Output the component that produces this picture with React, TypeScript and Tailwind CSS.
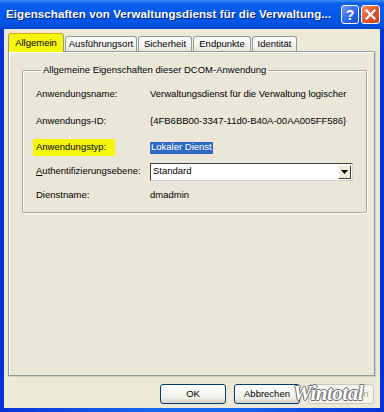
const rows = [
  { label: "Anwendungsname:", value: "Verwaltungsdienst für die Verwaltung logischer" },
  { label: "Anwendungs-ID:", value: "{4FB6BB00-3347-11d0-B40A-00AA005FF586}" },
];

const tabs = ["Ausführungsort", "Sicherheit", "Endpunkte", "Identität"];
const tabWidths = ["w-[72px]", "w-[54px]", "w-[58px]", "w-[45px]"];

const TitleButton = ({ kind }: { kind: "help" | "close" }) => (
  <div
    className={
      kind === "help"
        ? "w-[18px] h-[19px] rounded-[3px] border border-white bg-[linear-gradient(135deg,#6d9cf8,#2a63e6_60%,#1a4fd4)] flex items-center justify-center"
        : "w-[19px] h-[19px] rounded-[3px] border border-white bg-[linear-gradient(135deg,#f0906a,#e1522a_55%,#c8401a)] flex items-center justify-center"
    }
  >
    {kind === "help" ? (
      <span className="text-white font-bold text-[14px] leading-none font-['Liberation_Sans',sans-serif]">?</span>
    ) : (
      <svg width="11" height="11" viewBox="0 0 11 11">
        <path d="M1.5 1.5 L9.5 9.5 M9.5 1.5 L1.5 9.5" stroke="white" strokeWidth="2.2" strokeLinecap="square" />
      </svg>
    )}
  </div>
);

const XpButton = ({ label, disabled }: { label: string; disabled?: boolean }) => (
  <div
    className={
      disabled
        ? "w-[66px] h-[20px] rounded-[3px] border border-[#c9c7ba] bg-[#f5f4ea] text-[#aca899] flex items-center justify-center"
        : "w-[66px] h-[20px] rounded-[3px] border border-[#003c74] bg-[linear-gradient(180deg,#ffffff,#f0f0ea_70%,#d6d0c5)] text-black flex items-center justify-center"
    }
  >
    {label}
  </div>
);

export default function App() {
  return (
    <div className="w-[384px] h-[412px] flex flex-col bg-[linear-gradient(90deg,#0831d9,#166aee_40%,#166aee_60%,#0831d9)] font-['Liberation_Sans',Arial,sans-serif] text-[9.5px] text-black overflow-hidden">
      {/* title bar */}
      <div className="h-[29px] shrink-0 flex items-center justify-between pl-[6px] pr-[4px] bg-[linear-gradient(180deg,#3d8ef5_0%,#0a5fea_12%,#0058ee_45%,#0054e3_80%,#0046c8_100%)]">
        <span className="text-white font-bold text-[11.5px] tracking-[0.1px] [text-shadow:1px_1px_0_#0a1e7a] whitespace-nowrap">
          Eigenschaften von Verwaltungsdienst für die Verwaltung...
        </span>
        <div className="flex gap-[2px] items-center">
          <TitleButton kind="help" />
          <TitleButton kind="close" />
        </div>
      </div>

      {/* dialog body */}
      <div className="flex-1 mx-[4px] mb-[4px] bg-[#ece9d8] flex flex-col pl-[4px] pr-[5px] pt-[3px]">
        {/* tabs */}
        <div className="flex items-end h-[19px] relative z-10">
          <div className="w-[56px] h-[19px] -mb-px rounded-t-[3px] border border-b-0 border-[#919b9c] border-t-[#e0b000] bg-[#f6f60c] flex items-center justify-center">
            Allgemein
          </div>
          {tabs.map((t, i) => (
            <div
              key={t}
              className={`${tabWidths[i]} h-[15px] ml-px rounded-t-[3px] border border-b-0 border-[#919b9c] bg-[linear-gradient(180deg,#ffffff,#f3f3ef_60%,#e6e4dc)] flex items-center justify-center`}
            >
              {t}
            </div>
          ))}
        </div>

        {/* tab page */}
        <div className="h-[325px] border border-[#919b9c] shadow-[inset_1px_1px_0_#ffffff,1px_1px_0_#d0ccbe] bg-[#eae7d9] pt-[12px] pl-[13px] pr-[7px]">
          <fieldset className="h-[149px] border border-[#a8a594] rounded-[2px] shadow-[inset_1px_1px_0_#ffffff,1px_1px_0_#ffffff] pl-[13px]">
            <legend className="ml-[5px] px-[2px] leading-[12px]">Allgemeine Eigenschaften dieser DCOM-Anwendung</legend>
            <div className="flex flex-col mt-[10px]">
              {rows.map((r, i) => (
                <div key={r.label} className={`flex items-center h-[17px] ${i > 0 ? "mt-[10px]" : ""}`}>
                  <span className="w-[114px]">{r.label}</span>
                  <span className="whitespace-nowrap">{r.value}</span>
                </div>
              ))}
              <div className="flex items-center h-[17px] mt-[9px]">
                <div className="w-[114px] flex">
                  <span className="-ml-[3px] pl-[3px] w-[82px] h-[17px] flex items-center bg-[#f6f60c]">Anwendungstyp:</span>
                </div>
                <span className="bg-[#316ac5] text-white px-[1px] h-[12px] flex items-center">Lokaler Dienst</span>
              </div>
              <div className="flex items-center h-[17px] mt-[7px]">
                <span className="w-[114px]">
                  <span className="underline underline-offset-1">A</span>uthentifizierungsebene:
                </span>
                <div className="w-[203px] h-[18px] border border-[#404040] border-r-[#d4d0c8] border-b-[#d4d0c8] bg-white flex items-center justify-between">
                  <span className="pl-[2px]">Standard</span>
                  <div className="w-[13px] h-[14px] mr-[1px] bg-[#ece9d8] border border-white border-r-[#404040] border-b-[#404040] flex items-center justify-center">
                    <svg width="7" height="4" viewBox="0 0 7 4">
                      <path d="M0 0 H7 L3.5 4 Z" fill="black" />
                    </svg>
                  </div>
                </div>
              </div>
              <div className="flex items-center h-[17px] mt-[7px]">
                <span className="w-[114px]">Dienstname:</span>
                <span>dmadmin</span>
              </div>
            </div>
          </fieldset>
        </div>

        {/* buttons */}
        <div className="relative flex justify-end gap-[8px] mt-[8px] pr-[1px]">
          <XpButton label="OK" />
          <XpButton label="Abbrechen" />
          <XpButton label="Übernehmen" disabled />
          <span className="absolute right-[12px] -top-[6px] font-['Liberation_Serif',serif] italic font-bold text-[21px] text-white tracking-[-0.5px] [text-shadow:1px_0_0_#6b6b6b,-1px_0_0_#6b6b6b,0_1px_0_#6b6b6b,0_-1px_0_#6b6b6b] pointer-events-none">
            Wintotal
          </span>
        </div>
      </div>
    </div>
  );
}
